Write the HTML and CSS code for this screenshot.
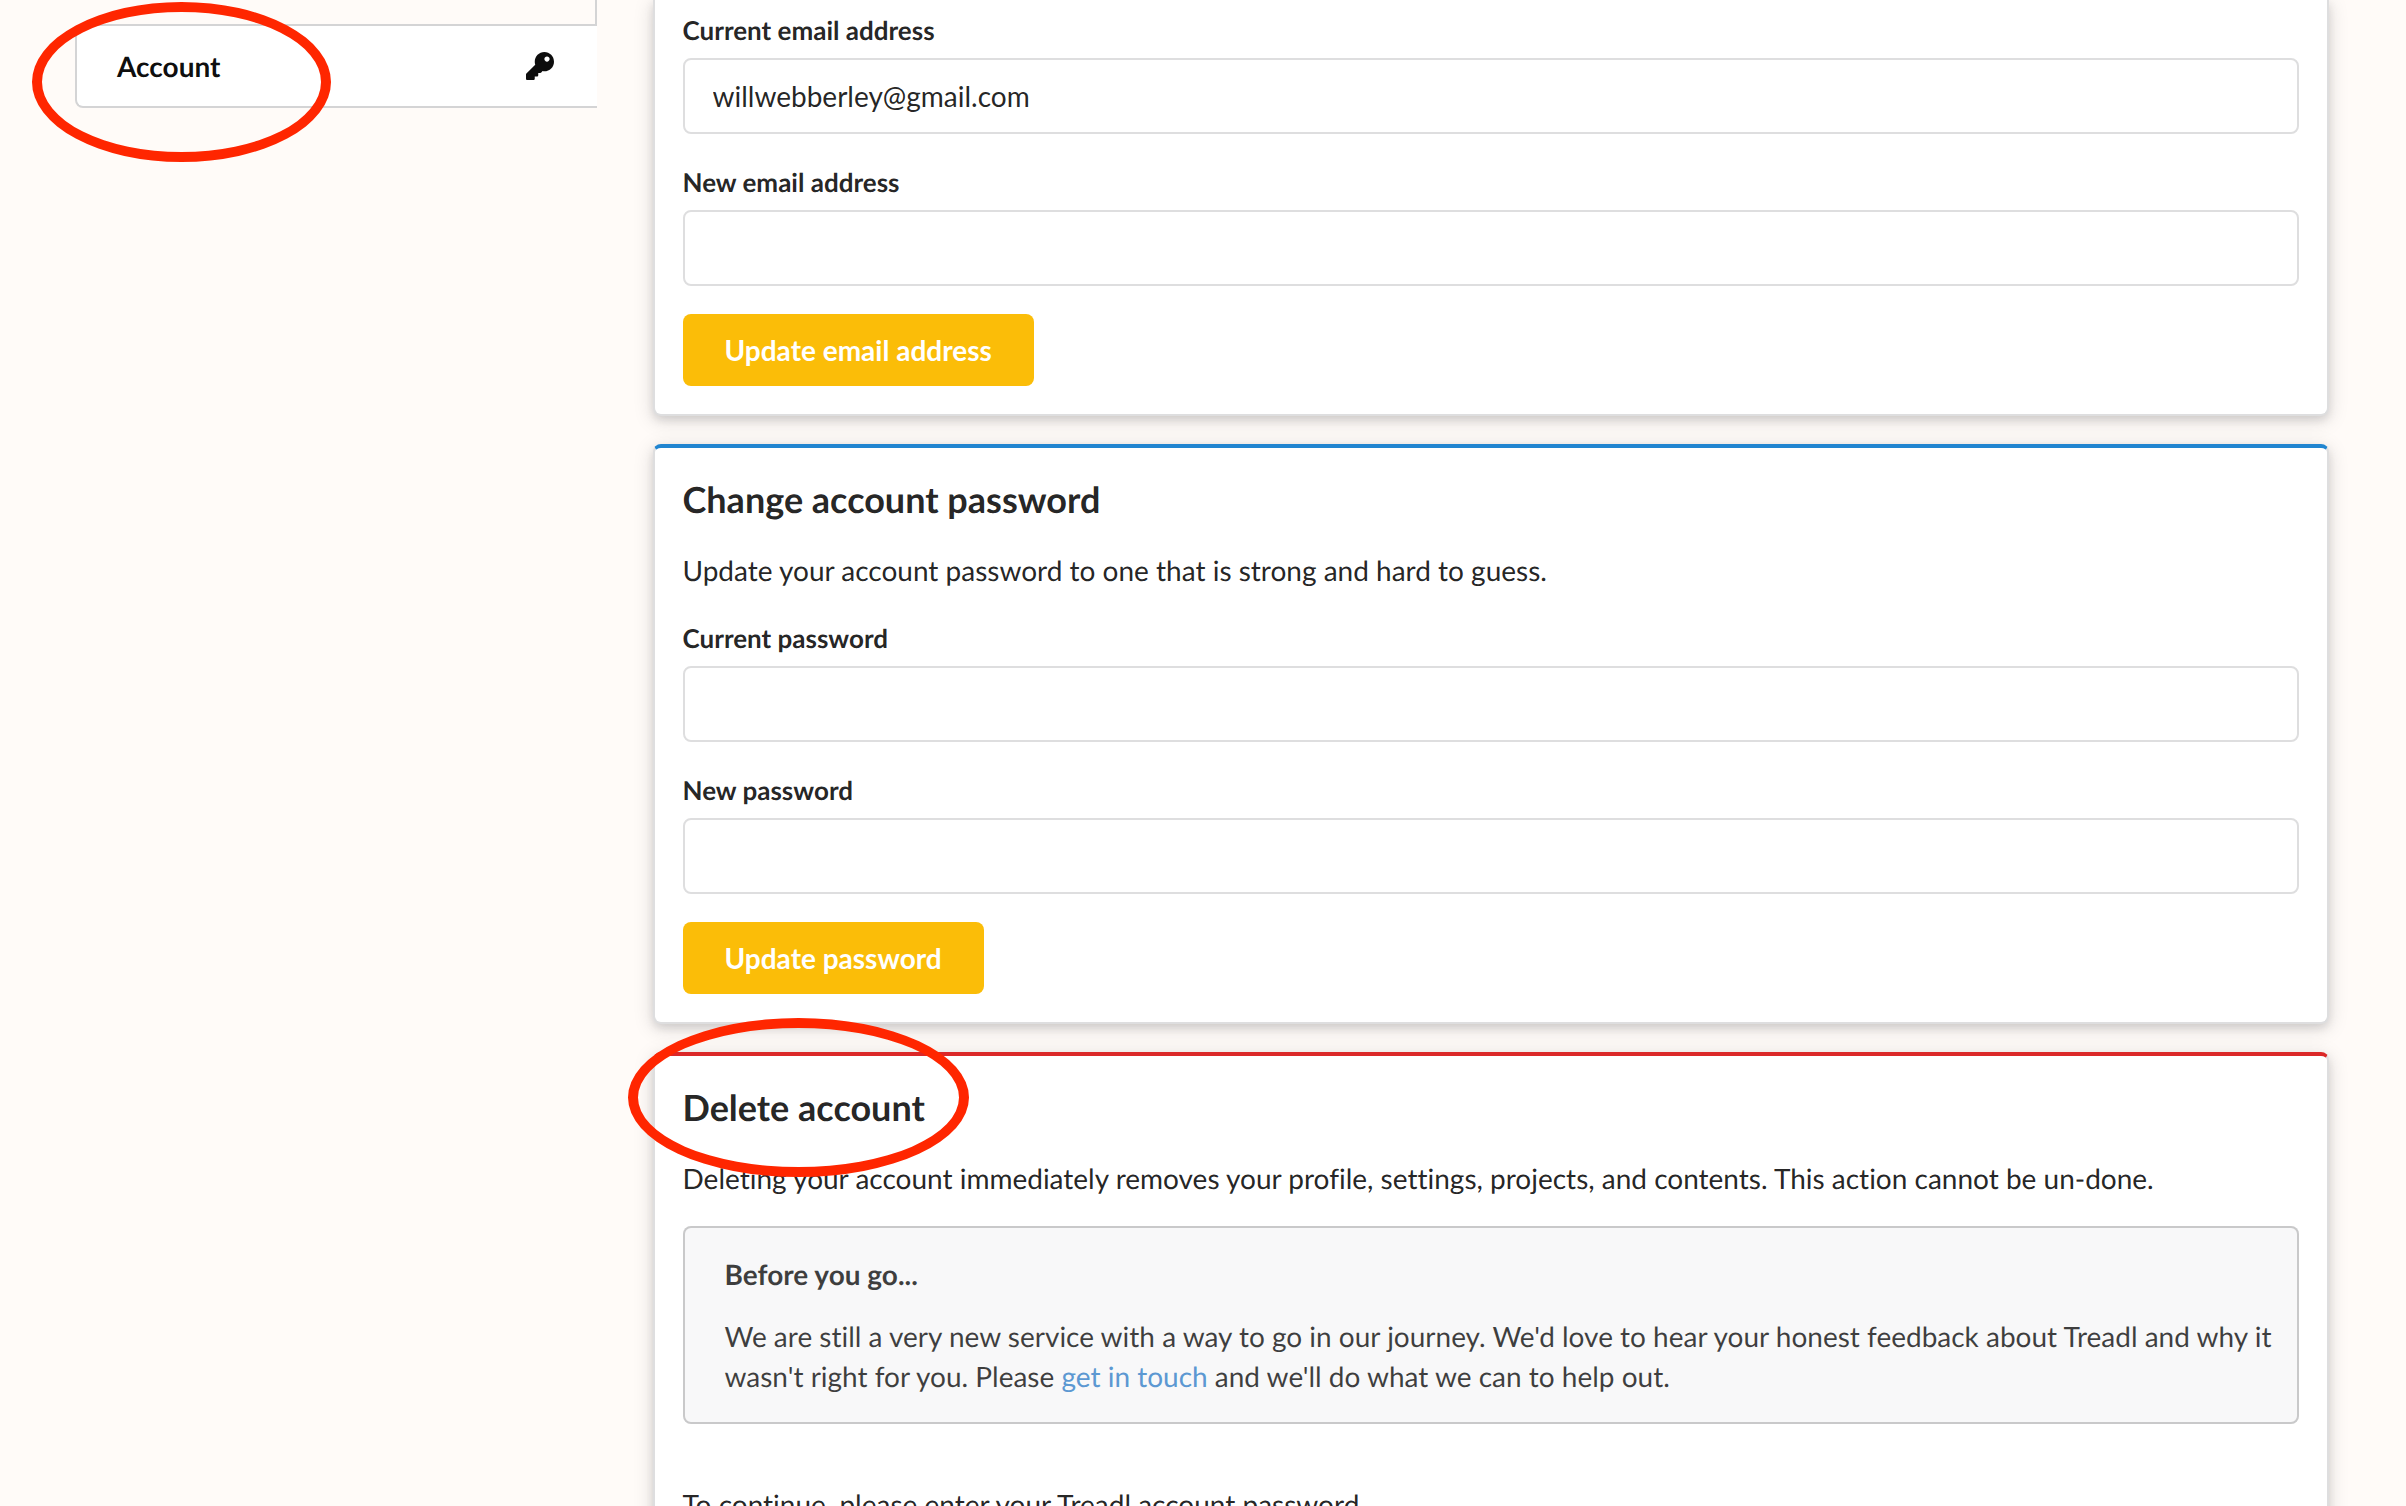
FILE: index.html
```html
<!DOCTYPE html>
<html lang="en">
<head>
<meta charset="utf-8">
<title>Account settings - Treadl</title>
<link rel="stylesheet" href="styles.css">
</head>
<body>
<div class="page">
  <aside class="sidebar">
    <nav class="menu">
      <a class="menu-item" href="#account">
        <span>Account</span>
        <svg class="icon" viewBox="0 0 512 512" aria-hidden="true"><path d="M512 176.001C512 273.203 433.202 352 336 352c-11.22 0-22.19-1.062-32.827-3.069l-24.012 27.014A23.999 23.999 0 0 1 261.223 384H224v40c0 13.255-10.745 24-24 24h-40v40c0 13.255-10.745 24-24 24H24c-13.255 0-24-10.745-24-24v-78.059c0-6.365 2.529-12.47 7.029-16.971l161.802-161.802C163.108 213.814 160 195.271 160 176 160 78.798 238.797.001 335.999 0 433.488-.001 512 78.511 512 176.001zM336 128c0 26.51 21.49 48 48 48s48-21.49 48-48-21.49-48-48-48-48 21.49-48 48z"/></svg>
        <span class="ring ring-account"></span>
      </a>
    </nav>
  </aside>
  <main class="content" id="account">
    <form class="segment segment-continued">
      <div class="field">
        <label for="current-email">Current email address</label>
        <input id="current-email" type="email" value="willwebberley@gmail.com">
      </div>
      <div class="field">
        <label for="new-email">New email address</label>
        <input id="new-email" type="email">
      </div>
      <button class="button" type="button">Update email address</button>
    </form>
    <form class="segment segment-blue">
      <h3>Change account password</h3>
      <p>Update your account password to one that is strong and hard to guess.</p>
      <div class="field">
        <label for="current-password">Current password</label>
        <input id="current-password" type="password">
      </div>
      <div class="field">
        <label for="new-password">New password</label>
        <input id="new-password" type="password">
      </div>
      <button class="button" type="button">Update password</button>
    </form>
    <section class="segment segment-red">
      <h3>Delete account</h3>
      <p>Deleting your account immediately removes your profile, settings, projects, and contents. This action cannot be un-done.</p>
      <div class="message">
        <h4>Before you go...</h4>
        <p>We are still a very new service with a way to go in our journey. We'd love to hear your honest feedback about Treadl and why it wasn't right for you. Please <a href="#contact">get in touch</a> and we'll do what we can to help out.</p>
      </div>
      <p>To continue, please enter your Treadl account password.</p>
      <span class="ring ring-delete"></span>
    </section>
  </main>
</div>
</body>
</html>
```
FILE: styles.css
```css
* {
  box-sizing: border-box;
}

html {
  scrollbar-width: none;
}

body {
  margin: 0;
  background: #fffbf8;
  color: rgba(0, 0, 0, 0.87);
  font-family: Lato, "Liberation Sans", sans-serif;
  font-size: 28px;
  font-variant-ligatures: none;
  line-height: 40px;
  text-rendering: geometricPrecision;
}

.page {
  display: flex;
  align-items: flex-start;
  height: 100vh;
  padding: 0 49px 0 47px;
  overflow: hidden;
}

.sidebar {
  flex: 0 0 25%;
  padding: 0 28px;
}

.content {
  flex: 1;
  padding: 0 28px;
}

/* Sidebar menu */
.menu {
  padding-top: 24px;
  border-right: 2px solid #d4d4d5;
}

.menu-item {
  position: relative;
  display: flex;
  align-items: center;
  justify-content: space-between;
  margin-right: -2px;
  padding: 20px 43px 20px 40px;
  border: 2px solid #d4d4d5;
  border-right: 0;
  border-radius: 8px 0 0 8px;
  background: #fff;
  color: rgba(0, 0, 0, 0.95);
  font-weight: 700;
  text-decoration: none;
}

.icon {
  width: 28px;
  height: 28px;
  fill: currentColor;
}

/* Cards */
.segment {
  position: relative;
  margin-bottom: 28px;
  padding: 28px;
  border: 2px solid #dededf;
  border-radius: 8px;
  background: #fff;
  box-shadow: 0 4px 8px rgba(34, 36, 38, 0.12), 0 4px 20px rgba(34, 36, 38, 0.15);
}

.segment-continued {
  padding-top: 10px;
  border-top: 0;
  border-radius: 0 0 8px 8px;
}

.segment-blue {
  border-top: 4px solid #2185d0;
}

.segment-red {
  border-top: 4px solid #db2828;
}

h3 {
  margin: 0 0 28px;
  font-size: 36px;
  line-height: 46px;
}

p {
  margin: 0 0 28px;
}

.field {
  margin-bottom: 28px;
}

.field label {
  display: block;
  margin-bottom: 8px;
  font-size: 26px;
  font-weight: 700;
}

.field input {
  display: block;
  width: 100%;
  height: 76px;
  padding: 19px 28px;
  border: 2px solid #dededf;
  border-radius: 8px;
  background: #fff;
  color: inherit;
  font: inherit;
  line-height: 34px;
}

.button {
  display: block;
  padding: 22px 42px;
  border: 0;
  border-radius: 8px;
  background: #fbbd08;
  color: #fff;
  font: inherit;
  font-weight: 700;
  line-height: 28px;
}

.message {
  margin-bottom: 60px;
  padding: 28px 10px 28px 42px;
  border-radius: 8px;
  background: #f8f8f9;
  box-shadow: inset 0 0 0 2px #c9c9ca;
  color: rgba(0, 0, 0, 0.75);
}

.message h4 {
  margin: 0 0 22px;
  font-size: 28px;
  line-height: 40px;
}

.message p {
  margin: 0;
}

.message a {
  color: #5c98d2;
  text-decoration: none;
}

/* Highlight rings drawn over the page */
.ring {
  position: absolute;
  border: 10px solid #ff2600;
  border-radius: 50%;
  pointer-events: none;
}

.ring-account {
  top: -24px;
  left: -45px;
  width: 299px;
  height: 160px;
}

.ring-delete {
  top: -38px;
  left: -27px;
  width: 341px;
  height: 159px;
}
```
